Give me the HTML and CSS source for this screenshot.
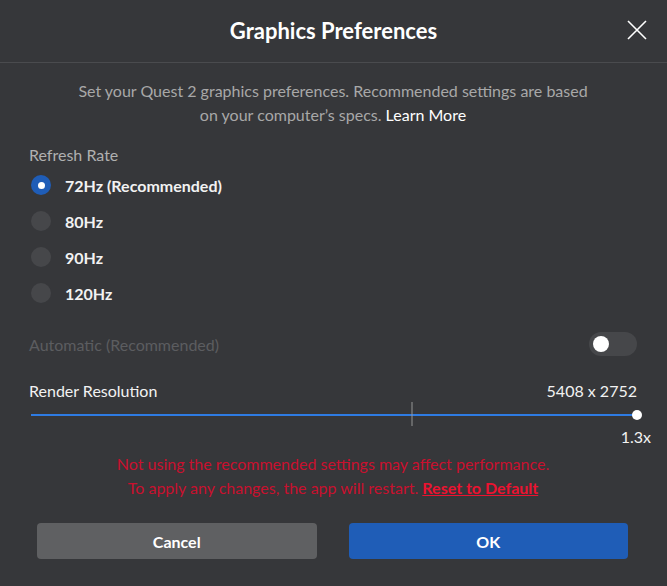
FILE: index.html
```html
<!DOCTYPE html>
<html lang="en">
<head>
<meta charset="utf-8">
<title>Graphics Preferences</title>
<link rel="stylesheet" href="styles.css">
</head>
<body>
<div class="dialog">
  <header class="header">
    <h1 class="title">Graphics Preferences</h1>
    <button class="close" aria-label="Close">
      <svg width="20" height="20" viewBox="0 0 20 20"><path d="M1 1 L19 19 M19 1 L1 19" stroke="#fff" stroke-width="1.6" fill="none"/></svg>
    </button>
  </header>
  <div class="content">
    <p class="desc">Set your Quest 2 graphics preferences. Recommended settings are based<br>on your computer’s specs. <span class="link">Learn More</span></p>
    <div class="section-label">Refresh Rate</div>
    <ul class="radios">
      <li class="radio-row"><span class="radio checked"></span><span class="radio-label">72Hz (Recommended)</span></li>
      <li class="radio-row"><span class="radio"></span><span class="radio-label">80Hz</span></li>
      <li class="radio-row"><span class="radio"></span><span class="radio-label">90Hz</span></li>
      <li class="radio-row"><span class="radio"></span><span class="radio-label">120Hz</span></li>
    </ul>
    <div class="auto-row">
      <span class="auto-label">Automatic (Recommended)</span>
      <span class="toggle"><span class="knob"></span></span>
    </div>
    <div class="res-row">
      <span>Render Resolution</span>
      <span>5408 x 2752</span>
    </div>
    <div class="slider">
      <div class="track"></div>
      <div class="tick"></div>
      <div class="thumb"></div>
      <div class="thumb-label">1.3x</div>
    </div>
    <p class="warning">Not using the recommended settings may affect performance.<br>To apply any changes, the app will restart. <a class="reset" href="#">Reset to Default</a></p>
    <div class="buttons">
      <button class="btn cancel">Cancel</button>
      <button class="btn ok">OK</button>
    </div>
  </div>
</div>
</body>
</html>
```
FILE: styles.css
```css
* { box-sizing: border-box; }
html, body { margin: 0; padding: 0; }
body {
  background: #36373a;
  font-family: Lato, "Liberation Sans", sans-serif;
  color: #fff;
}
.dialog {
  width: 667px;
  height: 586px;
  background: #36373a;
}
.header {
  height: 63px;
  border-bottom: 1px solid #4a4b4e;
  display: flex;
  align-items: center;
  justify-content: center;
  position: relative;
}
.title {
  margin: 0;
  font-size: 22px;
  font-weight: 700;
  color: #fff;
  line-height: 24px;
  padding-bottom: 1px;
}
.close {
  position: absolute;
  right: 20px;
  top: 20px;
  width: 20px;
  height: 20px;
  padding: 0;
  border: 0;
  background: none;
  display: flex;
}
.content {
  padding: 0 30px 0 29px;
}
.desc {
  margin: 16px 0 0;
  text-align: center;
  font-size: 16px;
  line-height: 24px;
  color: #a8a8a8;
}
.link { color: #fff; }
.section-label {
  margin-top: 18px;
  font-size: 16px;
  line-height: 20px;
  color: #b0b0b0;
}
.radios {
  list-style: none;
  margin: 2px 0 0;
  padding: 0;
}
.radio-row {
  height: 36px;
  display: flex;
  align-items: center;
  gap: 14px;
  padding-left: 2px;
}
.radio {
  width: 20px;
  height: 20px;
  border-radius: 50%;
  background: #46474a;
  display: flex;
  align-items: center;
  justify-content: center;
}
.radio.checked { background: #1f5db7; }
.radio.checked::after {
  content: "";
  width: 7px;
  height: 7px;
  border-radius: 50%;
  background: #fff;
}
.radio-label {
  font-size: 16px;
  font-weight: 700;
  color: #f2f2f2;
}
.auto-row {
  margin-top: 21px;
  height: 24px;
  display: flex;
  align-items: center;
  justify-content: space-between;
}
.auto-label {
  font-size: 16px;
  color: #5c5d60;
}
.toggle {
  width: 48px;
  height: 24px;
  border-radius: 12px;
  background: #46474a;
  display: flex;
  align-items: center;
  padding-left: 4px;
}
.knob {
  width: 16px;
  height: 16px;
  border-radius: 50%;
  background: #fff;
}
.res-row {
  margin-top: 25px;
  display: flex;
  justify-content: space-between;
  font-size: 16px;
  line-height: 20px;
  color: #f2f2f2;
}
.slider {
  position: relative;
  height: 26px;
  margin-top: 1px;
  margin-left: 2px;
}
.track {
  position: absolute;
  left: 0;
  right: 0;
  top: 12px;
  height: 2px;
  background: #2e7be3;
}
.tick {
  position: absolute;
  left: 380px;
  top: 0;
  width: 2px;
  height: 24px;
  background: rgba(160,160,160,0.45);
}
.thumb {
  position: absolute;
  right: -5px;
  top: 8px;
  width: 10px;
  height: 10px;
  border-radius: 50%;
  background: #fff;
}
.thumb-label {
  position: absolute;
  right: -14px;
  top: 25px;
  font-size: 16px;
  line-height: 20px;
  color: #f2f2f2;
}
.warning {
  margin: 24px 0 0;
  text-align: center;
  font-size: 16px;
  line-height: 24px;
  color: #c9102e;
}
.reset {
  color: #ec1230;
  font-weight: 700;
  text-decoration: underline;
}
.buttons {
  margin-top: 23px;
  padding: 0 9px 0 8px;
  display: flex;
  gap: 32px;
}
.btn {
  flex: 1;
  height: 36px;
  border: 0;
  border-radius: 4px;
  font-family: inherit;
  font-size: 16px;
  font-weight: 700;
  color: #fff;
}
.cancel { background: #5f6062; }
.ok { background: #1f5db7; }
```
